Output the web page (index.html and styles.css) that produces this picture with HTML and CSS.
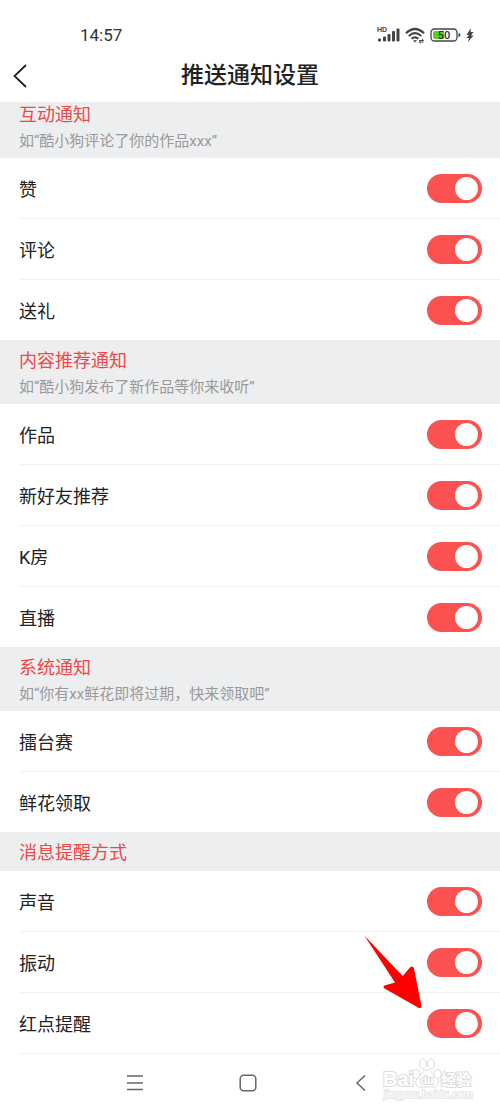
FILE: index.html
```html
<!DOCTYPE html>
<html lang="zh-CN">
<head>
  <meta charset="UTF-8">
  <meta name="viewport" content="width=device-width, initial-scale=1">
  <title>推送通知设置</title>
  <link rel="stylesheet" href="styles.css">
</head>
<body>
  <div class="status-bar">
    <span class="time">14:57</span>
    <div class="status-icons">
      <svg width="23" height="18" viewBox="0 0 23 18">
        <text class="hd" x="0" y="6">HD</text>
        <g fill="#444">
          <rect x="1" y="12.500" width="3" height="3" rx="1"/>
          <rect x="6" y="10.500" width="3" height="5" rx="1"/>
          <rect x="10.500" y="8" width="3" height="7.500" rx="1"/>
          <rect x="15" y="5" width="3" height="10.500" rx="1"/>
          <rect x="19.500" y="2.500" width="3" height="13" rx="1"/>
        </g>
      </svg>
      <svg width="20" height="18" viewBox="0 0 20 18" fill="none" stroke="#444" stroke-width="2.2">
        <path d="M1 7.2Q10 -1.2 19 7.2"/>
        <path d="M3.8 10Q10 4.4 16.2 10"/>
        <path d="M6.6 12.8Q10 9.8 13.4 12.8"/>
        <path d="M8 14.2h4L10 16.5z" fill="#444" stroke="none"/>
        <path d="M14 14.5h4.5l-1.6-1.5M18.6 16H14.2l1.6 1.3" stroke-width="1"/>
      </svg>
      <svg width="31" height="18" viewBox="0 0 31 18">
        <rect x="1" y="3" width="26" height="12" rx="3.5" fill="#fff" stroke="#444" stroke-width="1.3"/>
        <path d="M5 5h9v8H5a2 2 0 0 1-2-2V7a2 2 0 0 1 2-2z" fill="#55cf20"/>
        <path d="M28.500 7q2 0 2 2t-2 2z" fill="#444"/>
        <text class="level" x="14" y="13">50</text>
      </svg>
      <svg width="8" height="18" viewBox="0 0 8 18">
        <path d="M5 2L0.500 9H3L0.500 12H3L2 16L7.500 9.500H5L7.500 6H4.500z" fill="#444"/>
      </svg>
    </div>
  </div>

  <header class="title-bar">
    <button class="back" aria-label="返回">
      <svg width="14" height="24" viewBox="0 0 14 24" fill="none" stroke="#222" stroke-width="1.8"><path d="M13 1L1.500 12L13 23"/></svg>
    </button>
    <h1>推送通知设置</h1>
  </header>

  <main>
    <section>
      <div class="group-head scrolled">
        <h2>互动通知</h2>
        <p>如“酷小狗评论了你的作品xxx”</p>
      </div>
      <label class="row">赞<input type="checkbox" class="switch" checked></label>
      <label class="row">评论<input type="checkbox" class="switch" checked></label>
      <label class="row">送礼<input type="checkbox" class="switch" checked></label>
    </section>

    <section>
      <div class="group-head">
        <h2>内容推荐通知</h2>
        <p>如“酷小狗发布了新作品等你来收听”</p>
      </div>
      <label class="row">作品<input type="checkbox" class="switch" checked></label>
      <label class="row">新好友推荐<input type="checkbox" class="switch" checked></label>
      <label class="row">K房<input type="checkbox" class="switch" checked></label>
      <label class="row">直播<input type="checkbox" class="switch" checked></label>
    </section>

    <section>
      <div class="group-head">
        <h2>系统通知</h2>
        <p>如“你有xx鲜花即将过期，快来领取吧”</p>
      </div>
      <label class="row">擂台赛<input type="checkbox" class="switch" checked></label>
      <label class="row">鲜花领取<input type="checkbox" class="switch" checked></label>
    </section>

    <section class="remind">
      <div class="group-head">
        <h2>消息提醒方式</h2>
      </div>
      <label class="row">声音<input type="checkbox" class="switch" checked></label>
      <label class="row">振动<input type="checkbox" class="switch" checked></label>
      <label class="row">红点提醒<input type="checkbox" class="switch" checked></label>
      <svg class="arrow" width="58" height="74" viewBox="0 0 58 74">
        <path d="M0.300 0.500L38.700 41L46 32.500Q49 30 50 33.500L57.500 71.500Q57.500 73.500 55 73L20.500 53.500Q18.500 51.500 20.500 50.500L31 47.500z" fill="#fe0000"/>
      </svg>
    </section>
  </main>

  <nav class="nav-bar">
    <button aria-label="菜单">
      <svg width="18" height="18" viewBox="0 0 18 18" stroke="#666" stroke-width="1.400"><path d="M1 2h16M1 9h16M1 15.500h16"/></svg>
    </button>
    <button aria-label="主页">
      <svg width="18" height="18" viewBox="0 0 18 18" fill="none" stroke="#666" stroke-width="1.500"><rect x="1.200" y="1.200" width="15.600" height="15.600" rx="3.500"/></svg>
    </button>
    <button aria-label="后退">
      <svg width="18" height="18" viewBox="0 0 18 18" fill="none" stroke="#666" stroke-width="1.500"><path d="M13 1.500L5 9L13 16.500"/></svg>
    </button>
    <svg class="watermark" width="92" height="48" viewBox="0 0 92 48">
      <text class="wm-logo" x="1" y="31">Bai</text>
      <g fill="#fff" stroke="#dcdcdc">
        <ellipse cx="34.500" cy="19" rx="3.500" ry="4.500"/>
        <ellipse cx="41" cy="9" rx="3.500" ry="5"/>
        <ellipse cx="49" cy="9" rx="3.500" ry="5"/>
        <ellipse cx="55.500" cy="19" rx="3.500" ry="4.500"/>
        <path d="M45 15c-4 0-5 4-8 7s-4 4-3 7 4 3.500 7 3h8c3 .5 6 0 7-3s0-4-3-7-4-7-8-7z"/>
      </g>
      <text class="wm-du" x="45" y="29">du</text>
      <text class="wm-cn" x="59" y="30">经验</text>
      <text class="wm-url" x="2" y="43">jingyan.baidu.com</text>
    </svg>
  </nav>
</body>
</html>
```
FILE: styles.css
```css
* {
  box-sizing: border-box;
}

body {
  margin: 0;
  background-color: #fff;
  color: #222;
  font-family: Roboto, "Noto Sans CJK SC", sans-serif;
}

h1, h2, p {
  margin: 0;
}

button {
  display: flex;
  padding: 0;
  border: none;
  background: none;
  cursor: pointer;
}

.status-bar {
  display: flex;
  align-items: center;
  justify-content: space-between;
  height: 50px;
  padding: 20px 26px 0 80px;
}

.time {
  font-size: 17px;
  color: #333;
}

.status-icons {
  display: flex;
  gap: 5px;
}

.hd {
  font: bold 7px "Liberation Sans", sans-serif;
  fill: #444;
}

.level {
  font: 500 11px Roboto, sans-serif;
  text-anchor: middle;
  fill: #333;
}

.title-bar {
  display: grid;
  grid-template-columns: 1fr auto 1fr;
  align-items: center;
  height: 52px;
  padding: 0 13px;
}

.title-bar h1 {
  font-size: 23px;
  line-height: 32px;
  font-weight: 500;
}

.group-head {
  padding: 9px 19px 7px;
  background-color: #edeef0;
}

/* top of the first header sits under the title bar */
.group-head.scrolled {
  padding-top: 1px;
}

.group-head h2 {
  font-size: 18px;
  line-height: 24px;
  font-weight: 400;
  color: #f04848;
}

.group-head p {
  margin-top: 4px;
  font-size: 15px;
  line-height: 20px;
  color: #999;
}

.row {
  display: flex;
  align-items: center;
  justify-content: space-between;
  height: 61px;
  margin-left: 19px;
  padding-right: 18px;
  border-bottom: 1px solid #f2f2f2;
  font-size: 18px;
}

.row:last-of-type {
  height: 60px;
  border-bottom: none;
}

.remind {
  position: relative;
}

.remind .group-head {
  padding-bottom: 6px;
}

.remind .row:last-of-type {
  height: 61px;
  border-bottom: 1px solid #f2f2f2;
}

.switch {
  appearance: none;
  display: flex;
  align-items: center;
  width: 55px;
  height: 29px;
  margin: 0;
  padding: 0 4px;
  border-radius: 15px;
  background-color: #ddd;
  cursor: pointer;
}

.switch::before {
  content: "";
  width: 23px;
  height: 23px;
  border-radius: 50%;
  background-color: #fff;
}

.switch:checked {
  justify-content: flex-end;
  background-color: #fb5151;
}

.arrow {
  position: absolute;
  right: 78px;
  bottom: 45px;
  pointer-events: none;
}

.nav-bar {
  position: relative;
  display: flex;
  align-items: center;
  justify-content: center;
  gap: 95px;
  height: 57px;
  padding-right: 4px;
}

.watermark {
  position: absolute;
  right: 26px;
  top: 1px;
  pointer-events: none;
}

.wm-logo, .wm-du, .wm-cn, .wm-url {
  font-family: "Liberation Sans", "Noto Sans CJK SC", sans-serif;
  font-weight: bold;
  fill: #fff;
  stroke: #dcdcdc;
  paint-order: stroke;
  stroke-width: 2px;
}

.wm-logo {
  font-size: 20px;
}

.wm-du {
  font-size: 11px;
  text-anchor: middle;
}

.wm-cn {
  font-size: 15px;
}

.wm-url {
  font-size: 11px;
  font-weight: normal;
  stroke: #e6e6e6;
}
```
